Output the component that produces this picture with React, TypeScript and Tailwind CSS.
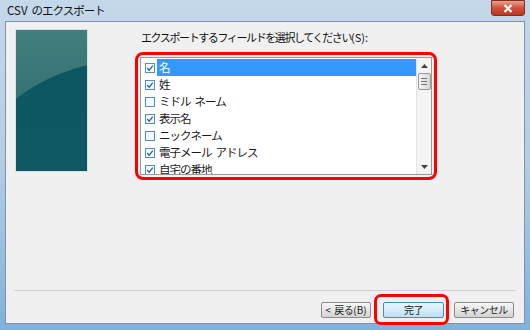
import React from 'react';

const fields = [
  { label: '名', checked: true },
  { label: '姓', checked: true },
  { label: 'ミドル ネーム', checked: false },
  { label: '表示名', checked: true },
  { label: 'ニックネーム', checked: false },
  { label: '電子メール アドレス', checked: true },
  { label: '自宅の番地', checked: true },
];

// keeps spaces at full width while the kana are tightened
function Label({ text }: { text: string }) {
  const parts = text.split(' ');
  return (
    <>
      {parts.map((p, i) => (
        <React.Fragment key={i}>
          {i > 0 && <span className="inline-block w-[4px]" />}
          {p}
        </React.Fragment>
      ))}
    </>
  );
}

function CheckBox({ checked }: { checked: boolean }) {
  return (
    <svg width="10" height="10" viewBox="0 0 10 10" className="shrink-0">
      <rect x="0.5" y="0.5" width="9" height="9" fill="#f4f9fd" stroke="#4f8fc8" />
      {checked && <path d="M2.2 5 L4.2 7.2 L7.8 2.6" fill="none" stroke="#2a5f9a" strokeWidth="1.2" />}
    </svg>
  );
}

function ListBox() {
  return (
    <div className="flex h-[118px] w-[292px] border border-[#9a9a9a] bg-white">
      <div className="flex-1 overflow-hidden pt-[1px] pl-[4px]">
        {fields.map((f, i) => (
          <div key={f.label} className="flex h-[17px] items-center gap-[2px]">
            <CheckBox checked={f.checked} />
            <span
              className={`flex h-full flex-1 items-center pl-[2px] pt-[1px] ${
                i === 0 ? 'bg-[#3399ff] text-white' : 'text-[#1a1a1a]'
              }`}
            >
              <Label text={f.label} />
            </span>
          </div>
        ))}
      </div>
      {/* scrollbar */}
      <div className="flex w-[15px] flex-col items-center border-l border-[#e4e4e4] bg-[#f4f4f4]">
        <div className="flex h-[15px] w-full items-center justify-center">
          <svg width="7" height="4" viewBox="0 0 7 4">
            <path d="M0 4 L3.5 0 L7 4 Z" fill="#444" />
          </svg>
        </div>
        <div className="flex h-[17px] w-[13px] flex-col items-center justify-center gap-[2px] rounded-[2px] border border-[#9a9a9a] bg-gradient-to-r from-[#f4f4f4] to-[#d8d8d8]">
          <div className="h-px w-[6px] bg-[#777]" />
          <div className="h-px w-[6px] bg-[#777]" />
          <div className="h-px w-[6px] bg-[#777]" />
        </div>
        <div className="flex-1" />
        <div className="flex h-[15px] w-full items-center justify-center">
          <svg width="7" height="4" viewBox="0 0 7 4">
            <path d="M0 0 L3.5 4 L7 0 Z" fill="#444" />
          </svg>
        </div>
      </div>
    </div>
  );
}

function Button({ children, primary, width }: { children: React.ReactNode; primary?: boolean; width: string }) {
  return (
    <button
      className={`flex h-[16px] items-center justify-center rounded-[2px] border text-[10px] leading-none tracking-[-0.5px] text-[#222] ${width} ${
        primary
          ? 'border-[#3c8ed0] bg-gradient-to-b from-[#eaf6fd] to-[#bfe0f5]'
          : 'border-[#8c8c8c] bg-gradient-to-b from-[#f6f6f6] to-[#d4d4d4]'
      }`}
    >
      {children}
    </button>
  );
}

export default function App() {
  return (
    <div
      className="flex h-[330px] w-[530px] flex-col overflow-hidden bg-gradient-to-b from-[#c5d8ea] via-[#b4cce4] to-[#7fb2da]"
      style={{ fontFamily: '"Noto Sans CJK JP", "Noto Sans", sans-serif' }}
    >
      {/* title bar */}
      <div className="flex h-[21px] shrink-0 items-start">
        <div className="pl-[7px] pt-[2px] text-[11.5px] leading-[16px] tracking-[-1px] text-[#111]">
          <span className="tracking-normal">CSV</span>
          <span className="inline-block w-[4px]" />
          のエクスポート
        </div>
        <div className="flex-1" />
        <div className="mr-[5px] flex h-[16px] w-[34px] items-center justify-center rounded-b-[3px] border border-[#8a2a20] bg-gradient-to-b from-[#e8a090] via-[#d0503c] to-[#b83820]">
          <svg width="10" height="9" viewBox="0 0 10 9">
            <path d="M1.5 1 L8.5 8 M8.5 1 L1.5 8" stroke="white" strokeWidth="2.2" />
          </svg>
        </div>
      </div>

      {/* client area */}
      <div className="mx-[5px] mb-[6px] flex flex-1 flex-col border border-[#7f93aa] bg-[#f0f0f0]">
        <div className="flex pt-[7px]">
          <div className="ml-[9px] h-[143px] w-[73px] shrink-0 overflow-hidden border border-[#d8e0e0] bg-gradient-to-b from-[#437e7e] to-[#25666a]">
            <div className="ml-[-69px] mt-[31px] h-[358px] w-[358px] rounded-full bg-gradient-to-b from-[#0c5660] via-[#0e5c66] to-[#146c78]" />
          </div>
          <div className="ml-[47px] flex flex-col">
            <div className="pl-[6px] text-[11px] leading-[16px] tracking-[-1.4px] text-[#111]">
              エクスポートするフィールドを選択してください<span className="tracking-normal">(S):</span>
            </div>
            <div className="mt-[7px] w-fit rounded-[8px] border-[3px] border-[#ff0000] p-[2px] text-[11.5px] leading-none tracking-[-1px]">
              <ListBox />
            </div>
          </div>
        </div>

        <div className="flex-1" />
        <div className="mx-[8px] h-[2px] border-t border-[#d0d0d0] border-b-white" />

        <div className="mb-[-2px] mt-[2px] flex items-start justify-end pr-[10px]">
          <div className="mt-[8px]">
            <Button width="w-[50px]">
              <span className="mr-[4px]">&lt;</span>戻る<span className="tracking-normal">(B)</span>
            </Button>
          </div>
          <div className="ml-[3px] rounded-[7px] border-[3px] border-[#ff0000] pl-[6px] pr-[2px] pt-[5px] pb-[4px]">
            <Button primary width="w-[61px]">完了</Button>
          </div>
          <div className="ml-[5px] mt-[8px]">
            <Button width="w-[60px]">キャンセル</Button>
          </div>
        </div>
      </div>
    </div>
  );
}
